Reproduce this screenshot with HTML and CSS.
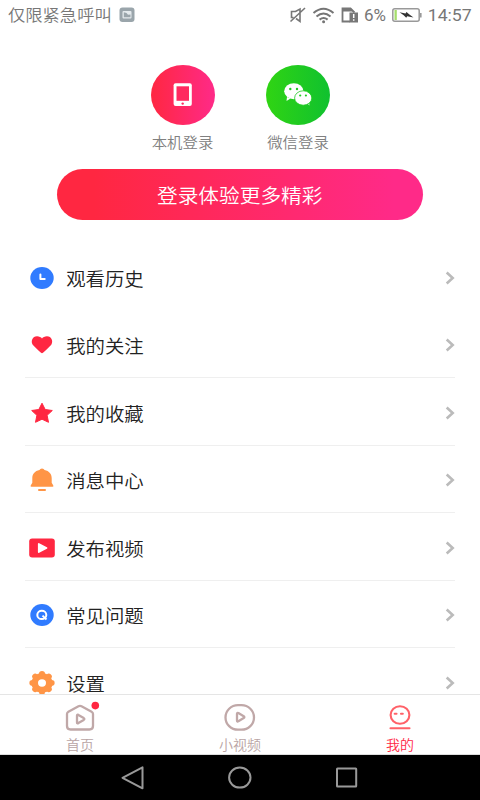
FILE: index.html
```html
<!DOCTYPE html>
<html lang="zh-CN">
<head>
<meta charset="utf-8">
<title>我的</title>
<link rel="stylesheet" href="styles.css">
</head>
<body>
<div class="phone">
  <header class="status">
    <span class="carrier t">仅限紧急呼叫</span>
    <svg class="shot" width="16" height="16" viewBox="0 0 16 16"><rect x=".5" y=".5" width="15" height="14.5" rx="3" fill="#9aa5ab"/><rect x="3.500" y="4" width="9" height="7.400" rx="1" fill="#e4eaed"/><path d="M4.800 5.200l2.700.8 1.500 1.800 2.500-.3v2.700H4.800z" fill="#9aa5ab"/></svg>
    <svg class="tray" width="144" height="30" viewBox="0 0 144 30">
      <g fill="none" stroke="#777" stroke-width="1.6"><path d="M8 18.500L12 21.500V9L7.500 11.500H3.500v6h2M17 8L2.500 21.500"/></g>
      <g fill="none" stroke="#757575" stroke-width="2"><path d="M25.500 13q10-8.500 20 0M28.500 16.500q7-6 14 0M31.600 19.600q4-3.200 8 0"/></g><circle cx="35.600" cy="21.700" r="1.500" fill="#757575"/>
      <path d="M62 21.500h-7.500V8.500h8l4 4" fill="none" stroke="#777" stroke-width="1.800"/><path d="M55 8h7.500l3.500 3.500H55zM61.500 12.500h8.500V22.500h-8.500z" fill="#777"/><path d="M65.700 14v4M65.700 19.200v1.500" stroke="#fff" stroke-width="1.500"/>
      <text x="76" y="22.300" textLength="22" lengthAdjust="spacingAndGlyphs">6%</text>
      <rect x="104.800" y="8.800" width="26.400" height="12.400" rx="2" fill="#fff" stroke="#999" stroke-width="1.500"/><path d="M106.500 10h2.300v10h-2.300z" fill="#a5de6c"/><path d="M132.800 13v4.500" stroke="#999" stroke-width="1.600"/><path d="M111.500 12.200l6 1.200 1-1.400 2.600 2.300 4.400 3.300-6.300-1.300-1 1.500-2.500-2.600z" fill="#333"/>
    </svg>
    <span class="clock t">14:57</span>
  </header>

  <main class="content">
    <section class="logins">
      <div class="login">
        <svg width="64" height="60" viewBox="0 0 64 60"><defs><linearGradient id="pink"><stop stop-color="#ff2741"/><stop offset="1" stop-color="#ff2a88"/></linearGradient></defs><ellipse cx="32" cy="30" rx="32" ry="30" fill="url(#pink)"/><rect x="22.600" y="18.300" width="18.200" height="22.800" rx="2" fill="#fff"/><path d="M25.500 21.300h12.500v14.500H25.500z" fill="#ff295f"/><circle cx="31.700" cy="38.600" r="1.200" fill="#ff2961"/></svg>
        <span class="t">本机登录</span>
      </div>
      <div class="login">
        <svg width="64" height="60" viewBox="0 0 64 60"><defs><linearGradient id="green"><stop stop-color="#30d413"/><stop offset="1" stop-color="#10c12f"/></linearGradient></defs><ellipse cx="32" cy="30" rx="32" ry="30" fill="url(#green)"/><path d="M21 32l-.5 4 4-2.500z" fill="#fff"/><ellipse cx="27.800" cy="26.200" rx="9.600" ry="8" fill="#fff"/><path d="M41 38l2.400 2.500-.4-5z" fill="#fff"/><ellipse cx="37.200" cy="33" rx="8.600" ry="7.200" fill="#fff" stroke="#20cb22" stroke-width=".8"/><g fill="#20ca22"><circle cx="24.300" cy="24" r="1.200"/><circle cx="31" cy="24" r="1.200"/><circle cx="34.200" cy="30.500" r="1.100"/><circle cx="39.900" cy="30.500" r="1.100"/></g></svg>
        <span class="t">微信登录</span>
      </div>
    </section>
    <div class="cta"><span class="t">登录体验更多精彩</span></div>

    <ul class="menu">
      <li class="plain"><svg class="ic" viewBox="0 0 28 28"><ellipse cx="14" cy="14" rx="11.700" ry="11" fill="#307bff"/><path d="M12.400 10.600v4.300h4.300" fill="none" stroke="#fff" stroke-width="2" stroke-linecap="round" stroke-linejoin="round"/></svg><span class="t">观看历史</span><svg class="go" viewBox="0 0 10 14"><path d="M1.700 1.500L7.700 7l-6 5.500"/></svg></li>
      <li><svg class="ic" viewBox="0 0 28 28"><path d="M14 22.200Q12.900 22.200 4.700 13.700C2.500 10.500 4.500 5.300 9 5.300c2.300 0 4 1 5 2.200 1-1.200 2.700-2.200 5-2.200 4.500 0 6.500 5.200 4.300 8.400Q15.100 22.200 14 22.200z" fill="#ff2741"/></svg><span class="t">我的关注</span><svg class="go" viewBox="0 0 10 14"><path d="M1.700 1.500L7.700 7l-6 5.500"/></svg></li>
      <li><svg class="ic" viewBox="0 0 28 28"><path d="M14 4.200l3.200 6.300 7.100 1-5.200 4.800 1.400 7L14 20.200l-6.500 3.100 1.400-7-5.200-4.800 7.100-1z" fill="#ff2741" stroke="#ff2741" stroke-linejoin="round"/></svg><span class="t">我的收藏</span><svg class="go" viewBox="0 0 10 14"><path d="M1.700 1.500L7.700 7l-6 5.500"/></svg></li>
      <li><svg class="ic" viewBox="0 0 28 28"><path d="M11.500 4q.5-1.500 2.500-1.500t2.500 1.500c4.700 1 7.200 4 7.200 8.300v4.500l1.600 2.600q.5 1.400-.8 1.400H3.500q-1.300 0-.8-1.400l1.600-2.600v-4.500c0-4.300 2.500-7.300 7.200-8.300z" fill="#ff9546"/><rect x="10" y="22.900" width="8" height="2.200" rx="1" fill="#ff9546"/></svg><span class="t">消息中心</span><svg class="go" viewBox="0 0 10 14"><path d="M1.700 1.500L7.700 7l-6 5.500"/></svg></li>
      <li><svg class="ic" viewBox="0 0 28 28"><rect x="1.200" y="4.400" width="25.600" height="19.200" rx="3" fill="#ff2741"/><path d="M10.800 10v8l7.700-4z" fill="#fff" stroke="#fff" stroke-width="1.800" stroke-linejoin="round"/></svg><span class="t">发布视频</span><svg class="go" viewBox="0 0 10 14"><path d="M1.700 1.500L7.700 7l-6 5.500"/></svg></li>
      <li><svg class="ic" viewBox="0 0 28 28"><ellipse cx="14" cy="14" rx="11.700" ry="11" fill="#307bff"/><ellipse cx="13.800" cy="13.900" rx="4.500" ry="4.200" fill="none" stroke="#fff" stroke-width="2"/><path d="M14.500 14.600l4 3.900" stroke="#fff" stroke-width="2"/></svg><span class="t">常见问题</span><svg class="go" viewBox="0 0 10 14"><path d="M1.700 1.500L7.700 7l-6 5.500"/></svg></li>
      <li><svg class="ic" viewBox="0 0 28 28"><g fill="#ff9546" transform="translate(14 13.900) scale(1.070 1)"><circle r="9.900"/><g id="teeth"><circle cy="-9" r="2.800"/><circle cy="9" r="2.800"/><circle cx="-9" r="2.800"/><circle cx="9" r="2.800"/></g><use href="#teeth" transform="rotate(45)"/></g><ellipse cx="14" cy="14" rx="4" ry="3.700" fill="#fff"/></svg><span class="t">设置</span><svg class="go" viewBox="0 0 10 14"><path d="M1.700 1.500L7.700 7l-6 5.500"/></svg></li>
    </ul>
  </main>

  <nav class="tabs">
    <div class="tab"><svg width="40" height="34" viewBox="0 0 40 34"><path d="M7 14q0-1.500 1.400-2.300L18.500 6.200q1.500-.8 3 0l10.100 5.500q1.400.8 1.400 2.300V26q0 3.500-3.500 3.500h-19Q7 29.500 7 26z"/><path d="M17 15.600v6.800q0 1.400 1.400.7l5.300-3.200q1.300-.9 0-1.800l-5.300-3.200q-1.400-.7-1.400.7z"/><circle class="dot" cx="35.300" cy="5.600" r="3.800"/></svg><span class="t">首页</span></div>
    <div class="tab"><svg width="40" height="34" viewBox="0 0 40 34"><rect x="5.500" y="5.200" width="28.500" height="24.500" rx="12.500"/><path d="M17 13.800v6.800q0 1.400 1.400.7l5.300-3.200q1.300-.9 0-1.800l-5.300-3.200q-1.400-.7-1.400.7z"/></svg><span class="t">小视频</span></div>
    <div class="tab active"><svg width="40" height="34" viewBox="0 0 40 34"><ellipse cx="20" cy="15" rx="9.400" ry="8.800"/><path d="M14.700 13.800h1.800M21 13.800h1.800M10.500 28.200h19"/></svg><span class="t">我的</span></div>
  </nav>
  <footer class="keys">
    <svg width="26" height="26" viewBox="0 0 26 26"><path d="M22.500 2.300v21L2.500 12.800z"/></svg>
    <svg width="26" height="26" viewBox="0 0 26 26"><ellipse cx="12.800" cy="12.600" rx="10.700" ry="10"/></svg>
    <svg width="26" height="26" viewBox="0 0 26 26"><rect x="3" y="3.500" width="19.200" height="18" rx=".5"/></svg>
  </footer>
</div>
</body>
</html>
```

FILE: styles.css
```css
* { box-sizing: border-box; }
body { margin: 0; background: #fff; font-family: "Noto Sans CJK SC", sans-serif; font-weight: 350; }
svg { display: block; flex: none; }
.phone { width: 480px; height: 800px; display: flex; flex-direction: column; overflow: hidden; }

/* glyphs are slightly wider than tall */
.t { display: inline-block; transform: scaleY(.94); white-space: nowrap; }

.status { height: 30px; flex: none; display: flex; align-items: center; padding-left: 8px; color: #777; }
.carrier { font-size: 17.3px; line-height: 28px; margin-bottom: 2px; }
.shot { margin-left: 7px; }
.tray { margin-left: 153px; }
.tray text { font: 17.5px Roboto, sans-serif; fill: #777; transform: scaleY(.95); }
.clock { font: 17.7px/30px Roboto, sans-serif; margin-left: -4px; }

.content { height: 664px; flex: none; overflow: hidden; }
.logins { display: flex; gap: 51.500px; padding: 35px 0 0 150.500px; }
.login { width: 64px; display: flex; flex-direction: column; align-items: center; }
.login .t { font-size: 15.4px; line-height: 20px; margin: 6px 0 1px; color: #808080; }
.cta { width: 365.500px; height: 50.500px; margin: 17px 0 0 57px; border-radius: 26px; background: linear-gradient(90deg, #ff2741 10%, #ff2a88 92%); color: #fff; font-size: 20.7px; display: flex; align-items: center; justify-content: center; }
.cta .t { padding-top: 1px; }

.menu { list-style: none; margin: 23.900px 0 0; padding: 0 25px; }
.menu li { height: 67.500px; padding-top: 2px; display: flex; align-items: center; border-bottom: 1px solid #efefef; }
.menu .plain { border-bottom-color: transparent; }
.menu .t { font-size: 19.4px; line-height: 28px; margin-left: 10.500px; padding-top: 2px; color: #222; }
.ic { width: 28px; height: 28px; margin-left: 2.700px; }
.go { width: 10px; height: 14px; margin-left: auto; fill: none; stroke: #bbb; stroke-width: 2.600; }

.tabs { height: 61px; flex: none; display: flex; border-top: 1px solid #e5e5e5; border-bottom: 1px solid #ddd; background: #fff; }
.tab { flex: 1; display: flex; flex-direction: column; align-items: center; padding-top: 5px; color: #b9a4a4; }
.tab svg { fill: none; stroke: #c0a8a8; stroke-width: 2.300; stroke-linejoin: round; stroke-linecap: round; }
.tab .dot { fill: #ff2741; stroke: none; }
.tab .t { font-size: 14px; line-height: 20px; }
.active { color: #ff2745; }
.tab.active svg { stroke: #ff6168; stroke-width: 2.100; }

.keys { height: 45px; flex: none; background: #000; display: flex; justify-content: center; gap: 81px; padding-top: 9.500px; }
.keys svg { fill: none; stroke: #999; stroke-width: 2; stroke-linejoin: round; }
```
